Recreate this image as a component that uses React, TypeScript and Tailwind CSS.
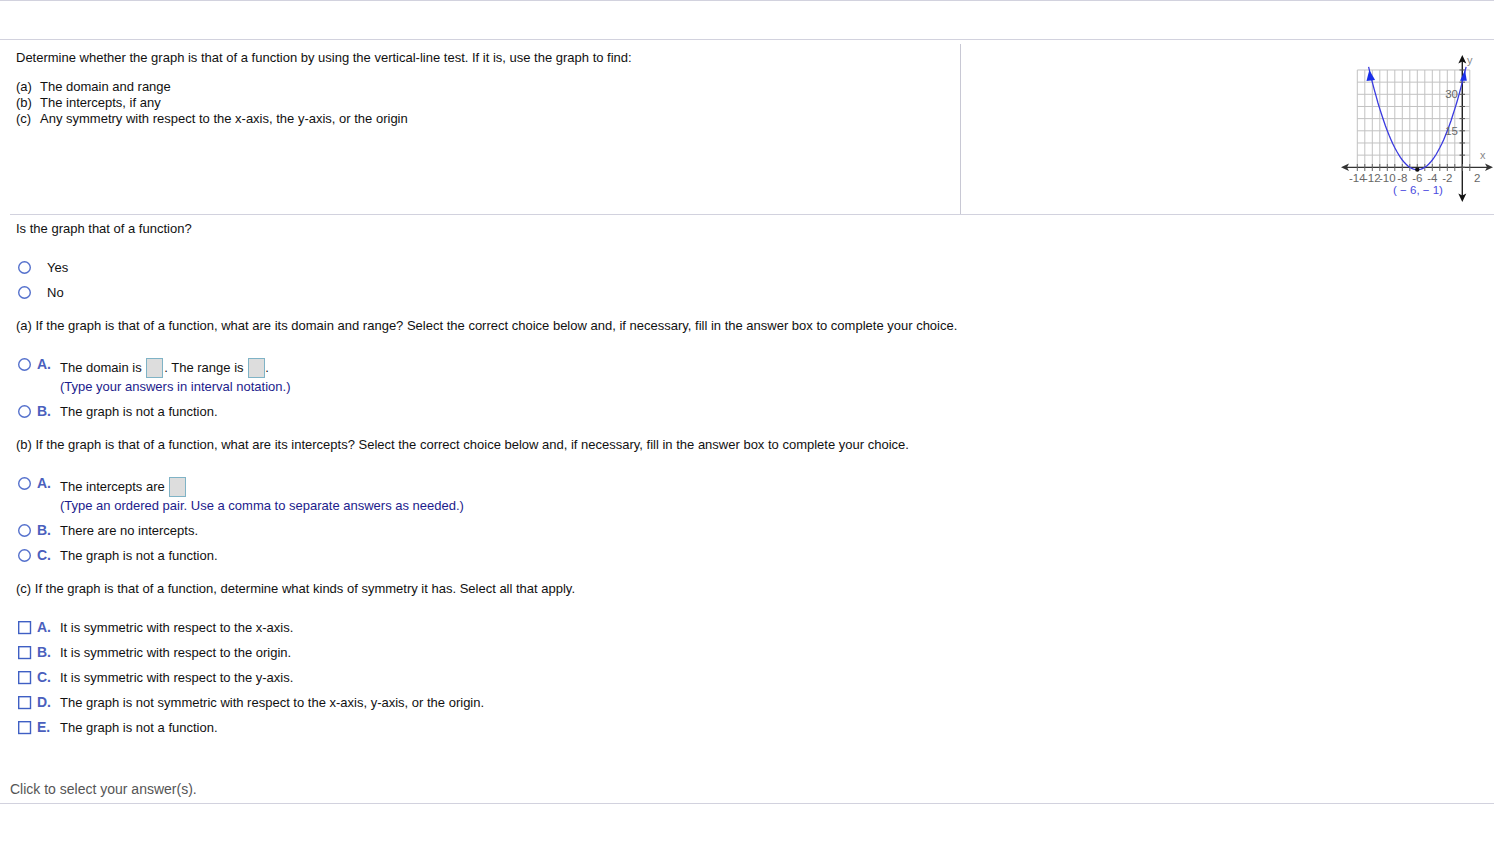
const font = { fontFamily: '"Liberation Sans", Arial, sans-serif' };

const Radio = () => (
  <svg width="14" height="14" viewBox="0 0 14 14" className="block shrink-0">
    <circle cx="6.5" cy="6.5" r="5.8" fill="#fff" stroke="#5470cc" strokeWidth="1.4" />
  </svg>
);

const Check = () => (
  <svg width="14" height="14" viewBox="0 0 14 14" className="block shrink-0">
    <rect x="0.7" y="0.7" width="11.8" height="11.8" fill="#fff" stroke="#3f5fc4" strokeWidth="1.4" />
  </svg>
);

const Blank = () => (
  <span className="inline-block align-middle -translate-y-px w-[17px] h-[20px] border border-[#7fb3c6] bg-[#dddddd]" />
);

const Letter = ({ children }: { children: string }) => (
  <span className="w-[28px] shrink-0 pl-[5px] text-[14px] font-bold text-[#4b5fbd]">{children}</span>
);

const Choice = ({ letter, text, square }: { letter: string; text: string; square?: boolean }) => (
  <div className="flex items-center h-[25px] pl-[18px]">
    {square ? <Check /> : <Radio />}
    <Letter>{letter}</Letter>
    <span>{text}</span>
  </div>
);

const Prompt = ({ children }: { children: string }) => (
  <div className="flex items-center h-[25px] mt-[8px] pl-[16px]">{children}</div>
);

const Graph = () => {
  const x = (u: number) => 132.3 + 7.5 * u;
  const y = (v: number) => 127.3 - 2.433 * v;
  const xs = Array.from({ length: 16 }, (_, i) => x(i - 14));
  const ys = Array.from({ length: 9 }, (_, i) => y(i * 5));
  const pts: string[] = [];
  for (let u = -12.5; u <= 0.5; u += 0.25) {
    pts.push(`${x(u).toFixed(1)},${y((u + 6) * (u + 6) - 1).toFixed(1)}`);
  }
  const labels = [-14, -12, -10, -8, -6, -4, -2, 2];
  return (
    <svg width="164" height="175" viewBox="0 0 164 175" className="block">
      {xs.map((p) => (
        <line key={p} x1={p} x2={p} y1={30} y2={127.3} stroke="#c2c2c2" strokeWidth="1" />
      ))}
      {ys.map((p) => (
        <line key={p} x1={27.3} x2={139.8} y1={p} y2={p} stroke="#c2c2c2" strokeWidth="1" />
      ))}
      <line x1="14" x2="160" y1="127.3" y2="127.3" stroke="#333" strokeWidth="1.3" />
      <line x1="132.3" x2="132.3" y1="18" y2="158" stroke="#222" strokeWidth="1.4" />
      <path d="M11 127.3l8-3.7-2 3.7 2 3.7z" fill="#333" />
      <path d="M163 127.3l-8-3.7 2 3.7-2 3.7z" fill="#333" />
      <path d="M132.3 15l-4 8.5 4-2 4 2z" fill="#111" />
      <path d="M132.3 162l-4-8.5 4 2 4-2z" fill="#111" />
      {xs.map((p) => (
        <line key={p} x1={p} x2={p} y1={124} y2={131} stroke="#666" strokeWidth="1" />
      ))}
      {ys.map((p) => (
        <line key={p} x1={129.5} x2={135} y1={p} y2={p} stroke="#555" strokeWidth="1" />
      ))}
      <polyline points={pts.join(" ")} fill="none" stroke="#3a3ae0" strokeWidth="1.3" />
      <path d="M39.3 30l-2.8 11 8.6-1z" fill="#1a2fe8" />
      <path d="M135 30l-5 10.7 6.8 0z" fill="#1a2fe8" />
      <circle cx="87.3" cy="129.5" r="2.2" fill="#111" />
      <g fontSize="11.5" fill="#666" style={font}>
        {labels.map((n) => (
          <text key={n} x={x(n)} y="142" textAnchor="middle">
            {n}
          </text>
        ))}
        <text x="128" y="58" textAnchor="end">30</text>
        <text x="128" y="95" textAnchor="end">15</text>
        <text x="137" y="24" fontSize="11" fill="#888">y</text>
        <text x="150" y="119" fontSize="11" fill="#888">x</text>
      </g>
      <text x="88" y="154" textAnchor="middle" fontSize="11.5" fill="#4a4ae0" style={font}>
        ( − 6, − 1)
      </text>
    </svg>
  );
};

export default function App() {
  return (
    <div className="w-[1494px] h-[841px] bg-white text-[13px] text-[#111] overflow-hidden" style={font}>
      <div className="h-[40px] border-t border-b border-[#d2d2de]" />
      <div className="ml-[10px] mt-[4px] h-[171px] border-b border-[#d2d2de] flex">
        <div className="w-[951px] h-[170px] border-r border-[#c8c8d4] pl-[6px] pt-[4px]">
          <div className="leading-[20px]">
            Determine whether the graph is that of a function by using the vertical-line test. If it is, use the graph to find:
          </div>
          <div className="mt-[11px] leading-[16px]">
            <div className="flex"><span className="w-[24px]">(a)</span>The domain and range</div>
            <div className="flex"><span className="w-[24px]">(b)</span>The intercepts, if any</div>
            <div className="flex"><span className="w-[24px]">(c)</span>Any symmetry with respect to the x-axis, the y-axis, or the origin</div>
          </div>
        </div>
        <div className="flex-1 flex justify-end">
          <div className="-mt-[4px]">
            <Graph />
          </div>
        </div>
      </div>

      <div className="flex items-center h-[26px] pt-[2px] pl-[16px]">Is the graph that of a function?</div>

      <div className="mt-[14px]">
        <div className="flex items-center h-[25px] pl-[18px]">
          <Radio />
          <span className="ml-[15px]">Yes</span>
        </div>
        <div className="flex items-center h-[25px] pl-[18px]">
          <Radio />
          <span className="ml-[15px]">No</span>
        </div>
      </div>

      <Prompt>
        (a) If the graph is that of a function, what are its domain and range? Select the correct choice below and, if necessary, fill in the answer box to complete your choice.
      </Prompt>

      <div className="mt-[19px] flex pl-[18px]">
        <div className="mt-[1px]"><Radio /></div>
        <span className="w-[28px] shrink-0 pl-[5px] text-[14px] font-bold text-[#4b5fbd] leading-[14px]">A.</span>
        <div className="mt-[1px]">
          <div className="h-[19px] leading-[20px] whitespace-nowrap">
            The domain is <span className="ml-[1px] mr-[1px]"><Blank /></span>. The range is <span className="ml-[1px]"><Blank /></span>.
          </div>
          <div className="h-[21px] leading-[20px] text-[#1c1c8c]">(Type your answers in interval notation.)</div>
        </div>
      </div>
      <div className="mt-[1px]">
        <Choice letter="B." text="The graph is not a function." />
      </div>

      <Prompt>
        (b) If the graph is that of a function, what are its intercepts? Select the correct choice below and, if necessary, fill in the answer box to complete your choice.
      </Prompt>

      <div className="mt-[19px] flex pl-[18px]">
        <div className="mt-[1px]"><Radio /></div>
        <span className="w-[28px] shrink-0 pl-[5px] text-[14px] font-bold text-[#4b5fbd] leading-[14px]">A.</span>
        <div className="mt-[1px]">
          <div className="h-[19px] leading-[20px] whitespace-nowrap">
            The intercepts are <span className="ml-[1px]"><Blank /></span>
          </div>
          <div className="h-[21px] leading-[20px] text-[#1c1c8c]">(Type an ordered pair. Use a comma to separate answers as needed.)</div>
        </div>
      </div>
      <div className="mt-[1px]">
        <Choice letter="B." text="There are no intercepts." />
        <Choice letter="C." text="The graph is not a function." />
      </div>

      <Prompt>
        (c) If the graph is that of a function, determine what kinds of symmetry it has. Select all that apply.
      </Prompt>

      <div className="mt-[14px]">
        <Choice square letter="A." text="It is symmetric with respect to the x-axis." />
        <Choice square letter="B." text="It is symmetric with respect to the origin." />
        <Choice square letter="C." text="It is symmetric with respect to the y-axis." />
        <Choice square letter="D." text="The graph is not symmetric with respect to the x-axis, y-axis, or the origin." />
        <Choice square letter="E." text="The graph is not a function." />
      </div>

      <div className="mt-[36px] h-[28px] pb-px border-b border-[#d2d2de] pl-[10px] flex items-center text-[14px] text-[#555]">
        Click to select your answer(s).
      </div>
    </div>
  );
}
